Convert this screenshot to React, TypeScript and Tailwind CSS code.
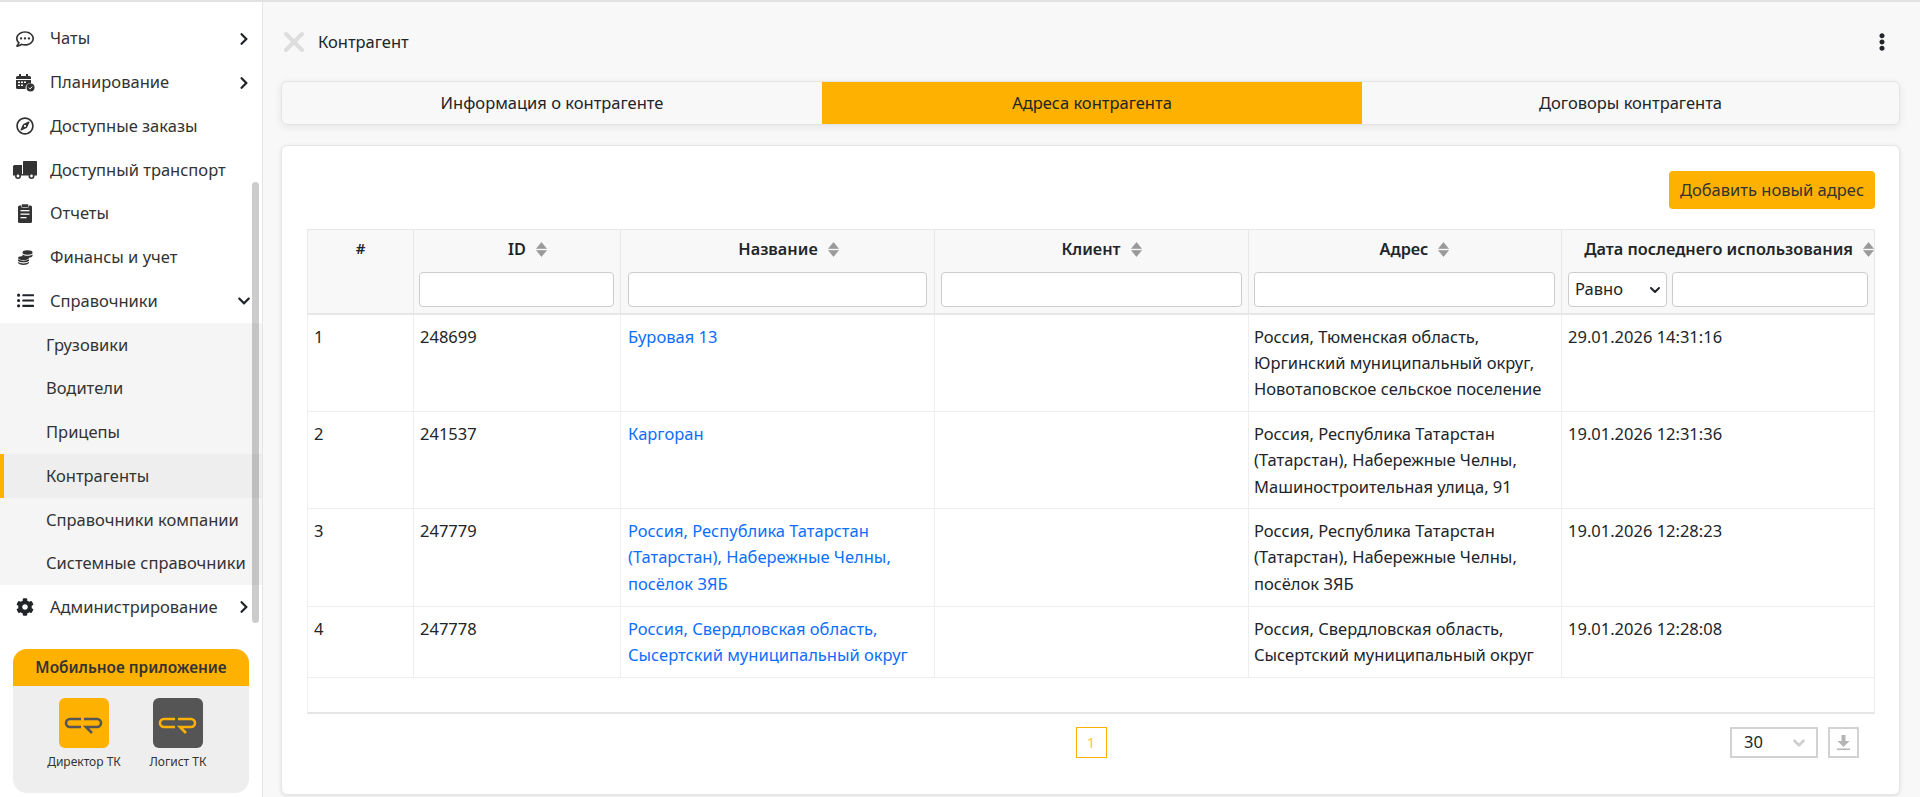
import { FaChevronDown, FaChevronRight, FaCog, FaEllipsisV, FaListUl, FaRegCommentDots, FaRegCompass } from "react-icons/fa";
import { ChevronDown, X } from "lucide-react";

const CalendarIcon = () => (
  <svg width="19" height="18" viewBox="0 0 19 18">
    <path fill="#333" d="M3 0h2v2h5V0h2v2h1.500A1.500 1.500 0 0 1 15 3.500V5H0V3.500A1.500 1.500 0 0 1 1.500 2H3z" />
    <path fill="#333" d="M0 6h15v3.500A4.500 4.500 0 0 0 9.600 15H1.500A1.500 1.500 0 0 1 0 13.500z" />
    <g fill="#fff">
      <rect x="2" y="7.500" width="2" height="1.500" />
      <rect x="5" y="7.500" width="2" height="1.500" />
      <rect x="8" y="7.500" width="2" height="1.500" />
      <rect x="2" y="10.500" width="2" height="1.500" />
      <rect x="5" y="10.500" width="2" height="1.500" />
    </g>
    <circle cx="14.500" cy="13.500" r="4" fill="#333" />
    <path d="M12.800 13.600l1.300 1.300 2.200-2.400" fill="none" stroke="#fff" strokeWidth="1" />
  </svg>
);

const TruckIcon = () => (
  <svg width="24" height="18" viewBox="0 0 24 18" fill="#333">
    <rect x="10" y="0" width="14" height="14" rx="0.500" />
    <path d="M1.500 4H9v10.500H0V5.500A1.500 1.500 0 0 1 1.500 4z" />
    <rect x="9" y="13" width="15" height="1.500" />
    <circle cx="5" cy="15" r="2.200" fill="#fff" stroke="#333" strokeWidth="1.600" />
    <circle cx="18.500" cy="15" r="2.200" fill="#fff" stroke="#333" strokeWidth="1.600" />
  </svg>
);

const ClipboardIcon = () => (
  <svg width="14" height="19" viewBox="0 0 14 19">
    <rect x="0" y="1.500" width="14" height="17.500" rx="1.500" fill="#333" />
    <rect x="3.500" y="0" width="7" height="3.500" rx="0.800" fill="#333" stroke="#fff" strokeWidth="0.600" />
    <g fill="#fff">
      <rect x="2.500" y="6" width="9" height="1.300" />
      <rect x="2.500" y="9.500" width="9" height="1.300" />
      <rect x="2.500" y="13" width="6" height="1.300" />
    </g>
  </svg>
);

const CoinsIcon = () => (
  <svg width="15" height="15" viewBox="0 0 15 15" fill="#333">
    <ellipse cx="9.500" cy="2.500" rx="5" ry="2.200" />
    <path d="M4.500 4.200c1 1 3 1.500 5 1.500s4-.5 5-1.500v1.600c0 1-2 2-4 2.100-1.500-1-4-1.700-6-1.400z" />
    <ellipse cx="5.500" cy="8" rx="5.500" ry="2" />
    <path d="M0 9.300c1 .9 3.200 1.400 5.500 1.400S10 10.200 11 9.300v1.500c-.9 1-3.200 1.500-5.500 1.500S.9 11.800 0 10.800z" />
    <path d="M0 12c1 .9 3.200 1.400 5.500 1.400S10 12.900 11 12v1c-.9 1.200-3.200 2-5.500 2S.9 14.200 0 13z" />
  </svg>
);

const SortIcon = () => (
  <svg width="11" height="15" viewBox="0 0 11 15" fill="#999999" className="shrink-0">
    <path d="M5.500 0.500L10.500 6.500H0.500z" stroke="#999999" strokeLinejoin="round" strokeWidth="0.600" />
    <path d="M5.500 14.500L10.500 8.500H0.500z" stroke="#999999" strokeLinejoin="round" strokeWidth="0.600" />
  </svg>
);

const menuTop = [
  { label: "Чаты", icon: <FaRegCommentDots size={18} />, arrow: true },
  { label: "Планирование", icon: <CalendarIcon />, arrow: true },
  { label: "Доступные заказы", icon: <FaRegCompass size={18} /> },
  { label: "Доступный транспорт", icon: <TruckIcon /> },
  { label: "Отчеты", icon: <ClipboardIcon /> },
  { label: "Финансы и учет", icon: <CoinsIcon /> },
];

const subMenu = ["Грузовики", "Водители", "Прицепы", "Контрагенты", "Справочники компании", "Системные справочники"];

const rows = [
  {
    n: 1,
    id: "248699",
    name: ["Буровая 13"],
    address: ["Россия, Тюменская область,", "Юргинский муниципальный округ,", "Новотаповское сельское поселение"],
    date: "29.01.2026 14:31:16",
    h: "h-[98px]",
  },
  {
    n: 2,
    id: "241537",
    name: ["Каргоран"],
    address: ["Россия, Республика Татарстан", "(Татарстан), Набережные Челны,", "Машиностроительная улица, 91"],
    date: "19.01.2026 12:31:36",
    h: "h-[97px]",
  },
  {
    n: 3,
    id: "247779",
    name: ["Россия, Республика Татарстан", "(Татарстан), Набережные Челны,", "посёлок ЗЯБ"],
    address: ["Россия, Республика Татарстан", "(Татарстан), Набережные Челны,", "посёлок ЗЯБ"],
    date: "19.01.2026 12:28:23",
    h: "h-[98px]",
  },
  {
    n: 4,
    id: "247778",
    name: ["Россия, Свердловская область,", "Сысертский муниципальный округ"],
    address: ["Россия, Свердловская область,", "Сысертский муниципальный округ"],
    date: "19.01.2026 12:28:08",
    h: "h-[71px]",
  },
];

const columns = [
  { title: "ID", w: "w-[207px] pl-[5px] pr-[6px]", shift: "pl-[22px]" },
  { title: "Название", w: "w-[314px] pl-[7px] pr-[7px]", shift: "pl-[22px]" },
  { title: "Клиент", w: "w-[314px] px-[6px]", shift: "pl-[20px]" },
  { title: "Адрес", w: "w-[313px] pl-[5px] pr-[6px]", shift: "pl-[20px]" },
];

const LogoMark = ({ stroke }: { stroke: string }) => (
  <svg width="50" height="50" viewBox="0 0 50 50" fill="none" stroke={stroke} strokeWidth="2.600">
    <path d="M22 21H11a4 4 0 0 0 0 8h11" />
    <path d="M25 21h13a4 4 0 0 1 0 8H27l6 6" />
  </svg>
);

const MenuRow = ({ label, icon, arrow }: { label: string; icon: React.ReactNode; arrow?: boolean }) => (
  <div className="flex h-[43.7px] items-center text-[#333]">
    <span className="flex w-[50px] shrink-0 justify-center">{icon}</span>
    <span className="whitespace-nowrap text-[16.5px] text-[#333]">{label}</span>
    {arrow && <FaChevronRight size={14} className="absolute left-[237px] text-[#212529]" />}
  </div>
);

export default function App() {
  return (
    <div className="flex h-[797px] w-[1920px] overflow-hidden border-t-2 border-[#e2e2e2] bg-[#f8f8f8] font-['Noto_Sans',sans-serif] text-[#212529]">
      {/* Sidebar */}
      <aside className="relative flex w-[263px] shrink-0 flex-col border-r border-[#e5e5e5] bg-white pt-[15px]">
        {menuTop.map((item) => (
          <div key={item.label} className="relative">
            <MenuRow label={item.label} icon={item.icon} arrow={item.arrow} />
          </div>
        ))}
        <div className="relative flex h-[43.700px] items-center">
          <span className="flex w-[50px] shrink-0 justify-center">
            <FaListUl size={17} />
          </span>
          <span className="text-[16.5px] text-[#333]">Справочники</span>
          <FaChevronDown size={14} className="absolute left-[237px]" />
        </div>
        <div className="bg-[#f5f5f5]">
          {subMenu.map((label) => (
            <div
              key={label}
              className={
                label === "Контрагенты"
                  ? "flex h-[43.700px] items-center border-l-4 border-[#ffb100] bg-[#eeeeee] pl-[42px] pt-[1px] text-[16.5px] text-[#333]"
                  : "flex h-[43.700px] items-center whitespace-nowrap pl-[46px] pt-[1px] text-[16.5px] text-[#333]"
              }
            >
              {label}
            </div>
          ))}
        </div>
        <div className="relative flex h-[43.700px] items-center pt-[1px]">
          <span className="flex w-[50px] shrink-0 justify-center">
            <FaCog size={18} />
          </span>
          <span className="text-[16.5px] text-[#333]">Администрирование</span>
          <FaChevronRight size={14} className="absolute left-[237px]" />
        </div>

        {/* Mobile app promo */}
        <div className="mx-[13px] mt-[20px] h-[144px] w-[236px] overflow-hidden rounded-[14px] bg-[#eeeeee]">
          <div className="flex h-[37px] items-center justify-center bg-[#ffb100] pt-[1px] text-[15.4px] font-semibold text-[#333]">
            Мобильное приложение
          </div>
          <div className="flex pl-[24px] pt-[12px]">
            <div className="flex w-[94px] flex-col items-center">
              <div className="h-[50px] w-[50px] rounded-[6px] bg-[#ffb100]">
                <LogoMark stroke="#555555" />
              </div>
              <span className="mt-[5px] whitespace-nowrap text-[12px] text-[#333]">Директор ТК</span>
            </div>
            <div className="flex w-[94px] flex-col items-center">
              <div className="h-[50px] w-[50px] rounded-[6px] bg-[#555555]">
                <LogoMark stroke="#ffb100" />
              </div>
              <span className="mt-[5px] whitespace-nowrap text-[12px] text-[#333]">Логист ТК</span>
            </div>
          </div>
        </div>

        {/* Scrollbar overlay */}
        <div className="absolute left-[252px] top-[180px] h-[441px] w-[7px] rounded-full bg-black/20" />
      </aside>

      {/* Main */}
      <main className="flex min-w-0 flex-1 flex-col pl-[18px]">
        <div className="flex h-[79px] w-[1619px] items-center pt-[1px]">
          <X size={32} strokeWidth={3} className="ml-[-3px] text-[#dddddd]" />
          <span className="ml-[8px] text-[16.5px]">Контрагент</span>
          <FaEllipsisV size={18} className="ml-auto mr-[9px] text-[#212529]" />
        </div>

        <div className="flex h-[44px] w-[1619px] overflow-hidden rounded-[6px] border border-[#e4e4e4] bg-[#f8f8f8] shadow-[0_2px_8px_rgba(0,0,0,0.08)]">
          <div className="flex w-[540px] items-center justify-center pt-[1px] text-[16.5px]">Информация о контрагенте</div>
          <div className="flex w-[540px] items-center justify-center bg-[#ffb100] pt-[1px] text-[16.5px]">Адреса контрагента</div>
          <div className="flex flex-1 items-center justify-center pt-[1px] text-[16.5px]">Договоры контрагента</div>
        </div>

        <section className="mt-[20px] flex h-[650px] w-[1619px] flex-col rounded-[6px] border border-[#e6e6e6] bg-white pl-[25px] pr-[24px] pt-[25px] shadow-[0_1px_4px_rgba(0,0,0,0.1)]">
          <div className="flex justify-end">
            <button className="flex h-[38px] w-[206px] items-center justify-center rounded-[4px] bg-[#ffb100] text-[16.5px] text-[#333]">
              Добавить новый адрес
            </button>
          </div>

          <div className="mt-[20px] w-[1568px]">
            <table className="w-[1568px] table-fixed border-collapse text-[16.5px]">
              <thead>
                <tr className="h-[84px] bg-[#f8f8f8]">
                  <th className="w-[106px] border border-b-2 border-[#e7e7e7] pt-[7px] align-top text-[15px] font-semibold">#</th>
                  {columns.map((col) => (
                    <th key={col.title} className={`${col.w} border border-b-2 border-[#e7e7e7] align-top text-[16.3px] font-semibold`}>
                      <div className={`${col.shift} mb-[3px] flex h-[39px] items-center justify-center gap-[10px]`}>
                        {col.title}
                        <SortIcon />
                      </div>
                      <input className="block h-[35px] w-full rounded-[4px] border border-[#cccccc] bg-white" />
                    </th>
                  ))}
                  <th className="border border-b-2 border-[#e7e7e7] pl-[6px] align-top text-[16.3px] font-semibold">
                    <div className="mb-[3px] flex h-[39px] items-center justify-end gap-[10px] whitespace-nowrap">
                      Дата последнего использования
                      <SortIcon />
                    </div>
                    <div className="mr-[6px] flex gap-[5px]">
                      <div className="flex h-[35px] w-[99px] shrink-0 items-center justify-between rounded-[4px] border border-[#cccccc] bg-white pl-[6px] pr-[3px] text-[16.5px] font-normal">
                        Равно
                        <ChevronDown size={16} strokeWidth={3} />
                      </div>
                      <input className="block h-[35px] min-w-0 flex-1 rounded-[4px] border border-[#cccccc] bg-white" />
                    </div>
                  </th>
                </tr>
              </thead>
              <tbody>
                {rows.map((row) => (
                  <tr key={row.n} className={row.h}>
                    <td className="border border-[#eeeeee] px-[6px] pt-[9px] align-top leading-[26.4px]">{row.n}</td>
                    <td className="border border-[#eeeeee] px-[6px] pt-[9px] align-top leading-[26.4px]">{row.id}</td>
                    <td className="border border-[#eeeeee] px-[7px] pt-[9px] align-top leading-[26.4px] text-[#0d6efd]">
                      {row.name.map((line) => (
                        <div key={line} className="whitespace-nowrap">{line}</div>
                      ))}
                    </td>
                    <td className="border border-[#eeeeee]" />
                    <td className="border border-[#eeeeee] pl-[5px] pr-[6px] pt-[9px] align-top leading-[26.4px]">
                      {row.address.map((line) => (
                        <div key={line} className="whitespace-nowrap">{line}</div>
                      ))}
                    </td>
                    <td className="border border-[#eeeeee] px-[6px] pt-[9px] align-top leading-[26.4px]">{row.date}</td>
                  </tr>
                ))}
              </tbody>
            </table>
            <div className="h-[36px] border border-t-0 border-b-2 border-[#eeeeee] border-b-[#e5e5e5]" />
          </div>

          <div className="relative mt-[13px] flex h-[32px] w-[1568px] items-start justify-center">
            <div className="flex h-[31px] w-[31px] items-center justify-center border border-[#ffb100] text-[15px] text-[#ffc64d]">1</div>
            <div className="absolute left-[1423px] top-0 flex items-start gap-[10px]">
              <div className="flex h-[31px] w-[88px] items-center justify-between border-2 border-[#d2d2d2] pl-[12px] pr-[8px] text-[16.5px]">
                30
                <ChevronDown size={18} strokeWidth={3.500} className="text-[#cfcfcf]" />
              </div>
              <div className="flex h-[31px] w-[31px] items-center justify-center border-2 border-[#d2d2d2]">
                <svg width="13" height="16" viewBox="0 0 13 16" fill="#b5b5b5">
                  <path d="M4.500 0h4v6h4l-6 6-6-6h4z" />
                  <path d="M0 13.500h13V15H0z" />
                </svg>
              </div>
            </div>
          </div>
        </section>
      </main>
    </div>
  );
}
